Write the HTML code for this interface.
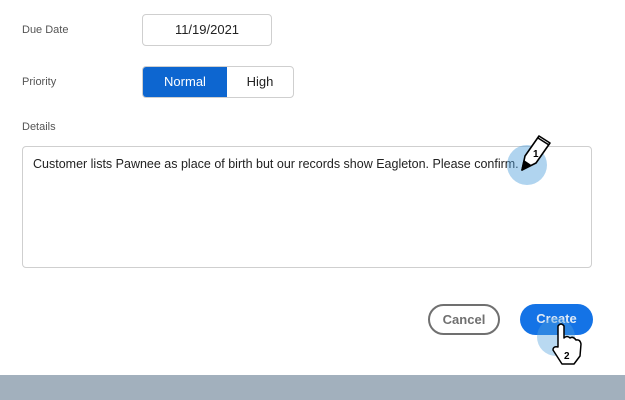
<!DOCTYPE html>
<html><head><meta charset="utf-8"><style>
body{margin:0;width:625px;height:400px;background:#fff;position:relative;overflow:hidden;font-family:"Liberation Sans",sans-serif}
.lbl{position:absolute;left:22px;font-size:11px;color:#555}
.box{position:absolute;border:1px solid #cfcfcf;border-radius:4px;box-sizing:border-box}
.btn{position:absolute;border-radius:16px;box-sizing:border-box;font-weight:bold;font-size:13px;text-align:center;line-height:30px}
</style></head><body>
<div class="lbl" style="top:24px">Due Date</div>
<div class="box" style="left:142px;top:14px;width:130px;height:32px;text-align:center;line-height:30px;font-size:13px;color:#222">11/19/2021</div>
<div class="lbl" style="top:76px">Priority</div>
<div class="box" style="left:142px;top:66px;width:152px;height:32px;overflow:hidden;font-size:13px">
<div style="position:absolute;left:0;top:0;width:84px;height:30px;background:#0d66d0;color:#fff;text-align:center;line-height:30px">Normal</div>
<div style="position:absolute;left:84px;top:0;width:66px;height:30px;color:#222;text-align:center;line-height:30px">High</div></div>
<div class="lbl" style="top:121px">Details</div>
<div class="box" style="left:22px;top:146px;width:570px;height:122px;padding:10px 10px;font-size:12.5px;color:#222">Customer lists Pawnee as place of birth but our records show Eagleton. Please confirm.</div>
<div class="btn" style="left:428px;top:304px;width:72px;height:31px;border:2px solid #707070;color:#707070;line-height:27px">Cancel</div>
<div class="btn" style="left:520px;top:304px;width:73px;height:31px;background:#1473e6;color:#dfe9f5">Create</div>
<div style="position:absolute;left:0;top:375px;width:625px;height:25px;background:#a2b0bd"></div>
<div style="position:absolute;left:507px;top:145px;width:40px;height:40px;border-radius:50%;background:rgba(80,160,220,.45)"></div>
<div style="position:absolute;left:537px;top:318px;width:38px;height:38px;border-radius:50%;background:rgba(80,160,220,.4)"></div>
<svg style="position:absolute;left:0;top:0" width="625" height="400">
<g stroke="#000" stroke-width="1.6" stroke-linejoin="round">
<path d="M522 170 L525 156 L539 136 L550 143 L536 163 Z" fill="#fff"/>
<path d="M522 170 L524 161 L530 165 Z" fill="#000"/>
<path d="M538 138 L549 145" />
</g>
<text x="533" y="157" font-size="10" font-family="Liberation Sans" font-weight="bold">1</text>
<g stroke="#000" stroke-width="1.5" stroke-linejoin="round">
<path d="M558 326 Q561 322 564 326 L564 338 Q567 335 570 338 Q573 336 576 340 Q580 339 581 344 L580 356 L574 364 L562 364 L553 350 Q553 346 558 347 Z" fill="#fff"/>
</g>
<text x="564" y="359" font-size="10" font-family="Liberation Sans" font-weight="bold">2</text>
</svg>
</body></html>
